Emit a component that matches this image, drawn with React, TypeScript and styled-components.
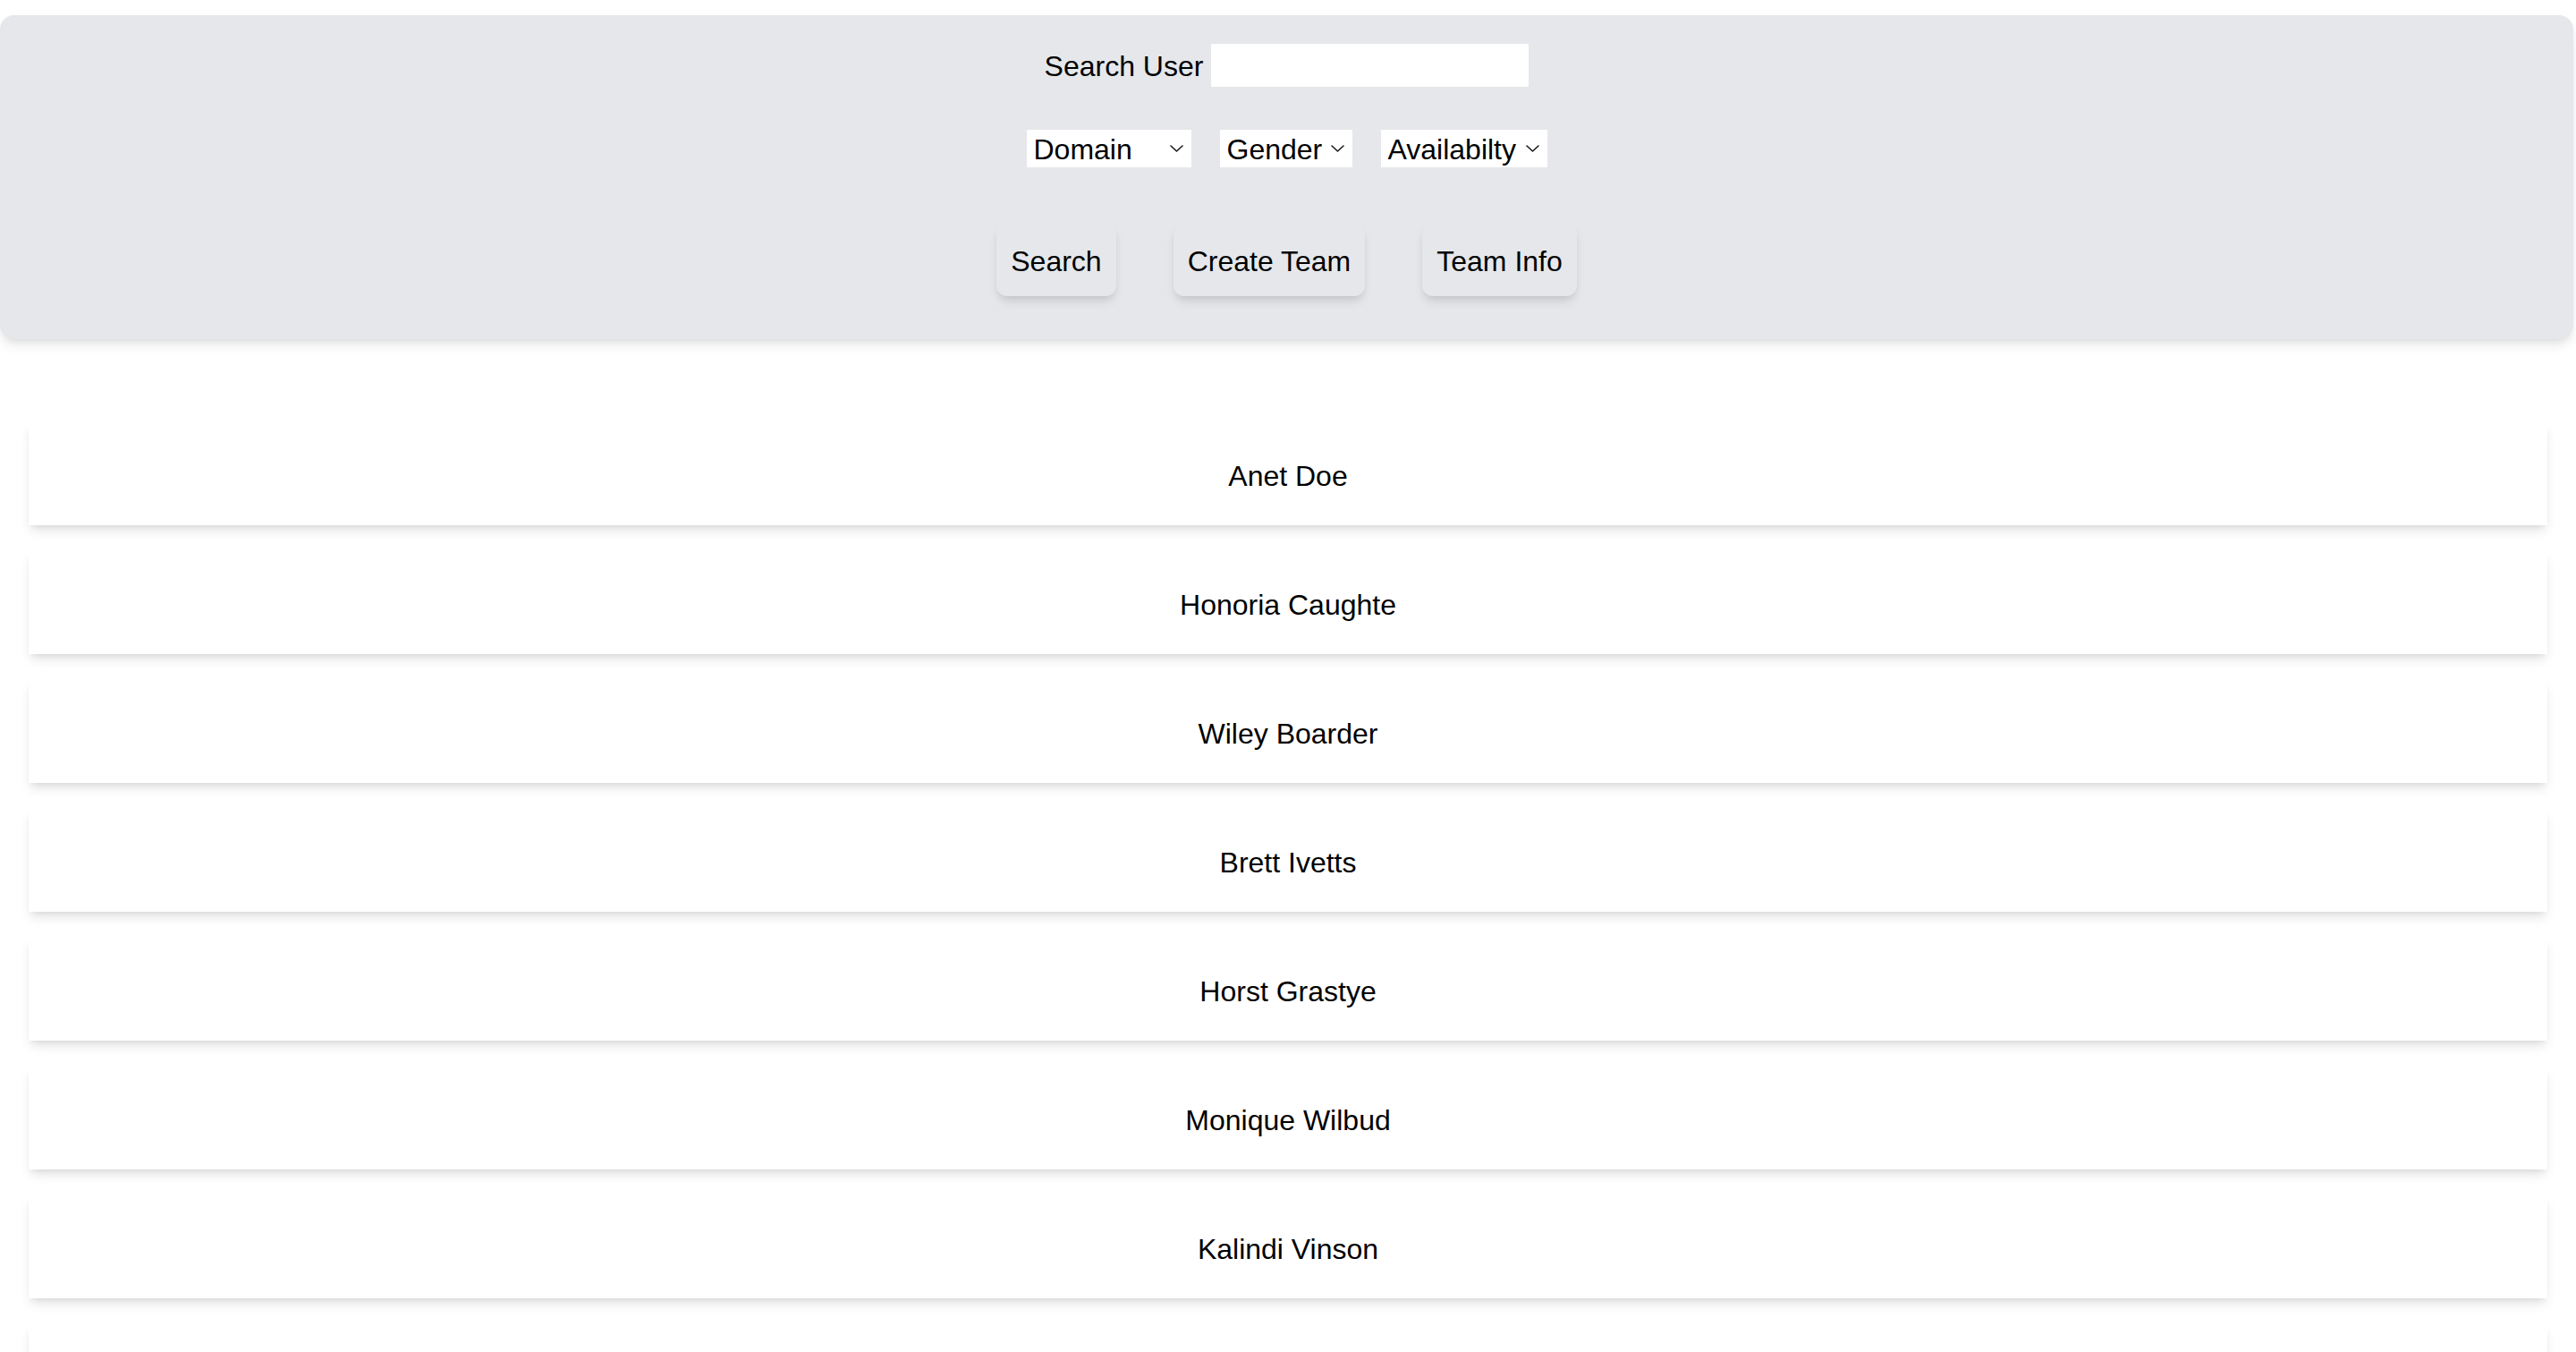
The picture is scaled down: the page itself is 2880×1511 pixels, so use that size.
import React from "react";
import styled, {createGlobalStyle} from "styled-components";

const users = [
    "Anet Doe",
    "Honoria Caughte",
    "Wiley Boarder",
    "Brett Ivetts",
    "Horst Grastye",
    "Monique Wilbud",
    "Kalindi Vinson",
    "Marlo Pennicott",
]

const filters = [
    {label: "Domain", width: 184},
    {label: "Gender", width: 148},
    {label: "Availabilty", width: 186},
]

const Chevron = () => (
    <svg width="15" height="8" viewBox="0 0 15 8" fill="none">
        <path d="M1 1l6.5 6L14 1" stroke="#1a1a1a" strokeWidth="1.6" strokeLinecap="round" strokeLinejoin="round"/>
    </svg>
)

const App = () => {
    return (
        <>
            <Global/>
            <Header>
                <SearchRow>
                    <Label htmlFor="search-user">Search User</Label>
                    <Input id="search-user" type="text"/>
                </SearchRow>
                <FilterRow>
                    {filters.map(f => (
                        <SelectWrap key={f.label} width={f.width}>
                            <Select defaultValue={f.label}>
                                <option>{f.label}</option>
                            </Select>
                            <Arrow><Chevron/></Arrow>
                        </SelectWrap>
                    ))}
                </FilterRow>
                <ButtonRow>
                    <Button>Search</Button>
                    <Button>Create Team</Button>
                    <Button>Team Info</Button>
                </ButtonRow>
            </Header>
            <List>
                {users.map(name => (
                    <Card key={name}>{name}</Card>
                ))}
            </List>
        </>
    )
}

export default App

const Global = createGlobalStyle`
  html, body {
    margin: 0;
    padding: 0;
    background: #ffffff;
    font-family: "Liberation Sans", Arial, sans-serif;
    color: #000;
    overflow: hidden;
  }
`
const Header = styled.div`
  margin: 17px 3px 0 0;
  padding: 32px 0 48px;
  background: #e5e7eb;
  border-radius: 16px;
  box-shadow: 0 8px 14px -2px rgba(0, 0, 0, 0.1), 0 4px 8px -4px rgba(0, 0, 0, 0.08);
  display: flex;
  flex-direction: column;
  align-items: center;
`
const SearchRow = styled.div`
  display: flex;
  align-items: center;
  gap: 9px;
  height: 48px;
`
const Label = styled.label`
  font-size: 32px;
  line-height: 48px;
  padding-top: 2px;
`
const Input = styled.input`
  width: 355px;
  height: 48px;
  box-sizing: border-box;
  border: none;
  outline: none;
  background: #fff;
  font-size: 32px;
  font-family: inherit;
  padding: 0 8px;
`
const FilterRow = styled.div`
  display: flex;
  align-items: center;
  gap: 32px;
  margin-top: 48px;
`
const SelectWrap = styled.div<{ width: number }>`
  position: relative;
  width: ${props => props.width}px;
  height: 42px;
  background: #fff;
`
const Select = styled.select`
  appearance: none;
  -webkit-appearance: none;
  width: 100%;
  height: 100%;
  border: none;
  outline: none;
  background: transparent;
  font-family: inherit;
  font-size: 32px;
  color: #000;
  padding: 1px 0 0 8px;
  margin: 0;
`
const Arrow = styled.span`
  position: absolute;
  right: 9px;
  top: 17px;
  display: flex;
  pointer-events: none;
`
const ButtonRow = styled.div`
  display: flex;
  gap: 64px;
  margin-top: 62px;
`
const Button = styled.button`
  font-family: inherit;
  font-size: 32px;
  line-height: 48px;
  color: #000;
  padding: 19px 16px 15px;
  border: none;
  border-radius: 12px;
  background: #e5e7eb;
  box-shadow: 0 8px 12px -2px rgba(0, 0, 0, 0.1), 0 4px 8px -4px rgba(0, 0, 0, 0.1);
  cursor: pointer;
`
const List = styled.div`
  display: flex;
  flex-direction: column;
  gap: 29px;
  margin-top: 93px;
  padding: 0 32px;
`
const Card = styled.div`
  height: 115px;
  box-sizing: border-box;
  padding-top: 6px;
  background: #fff;
  display: flex;
  justify-content: center;
  align-items: center;
  font-size: 32px;
  box-shadow: 0 8px 12px -2px rgba(0, 0, 0, 0.1), 0 4px 8px -4px rgba(0, 0, 0, 0.1);
`
